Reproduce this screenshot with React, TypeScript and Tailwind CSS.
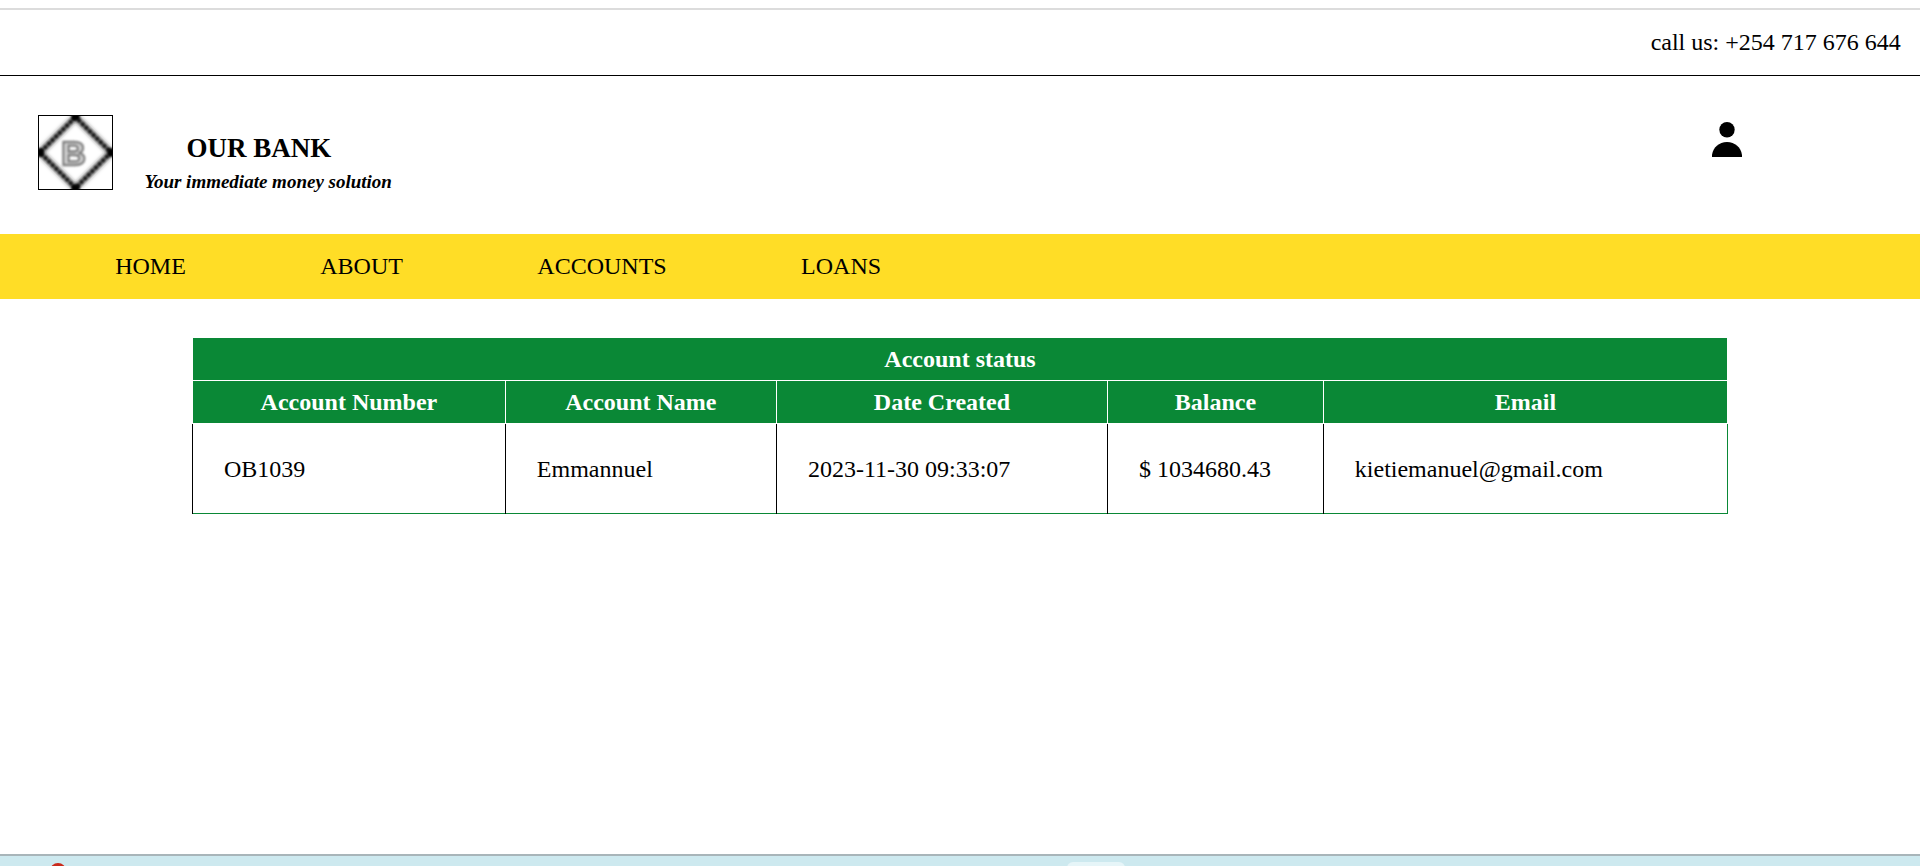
import React from "react";

const navItems = ["HOME", "ABOUT", "ACCOUNTS", "LOANS"];

const columns = [
  { title: "Account Number", value: "OB1039" },
  { title: "Account Name", value: "Emmannuel" },
  { title: "Date Created", value: "2023-11-30 09:33:07" },
  { title: "Balance", value: "$ 1034680.43" },
  { title: "Email", value: "kietiemanuel@gmail.com" },
];

function Logo() {
  return (
    <svg viewBox="0 0 73 73" className="size-[75px] border border-black" role="img" aria-label="Our Bank logo">
      <defs>
        <filter id="soft" x="-20%" y="-20%" width="140%" height="140%">
          <feGaussianBlur stdDeviation="1.9" />
        </filter>
        <filter id="bead" x="-20%" y="-20%" width="140%" height="140%">
          <feGaussianBlur stdDeviation="0.9" />
        </filter>
        <filter id="letter" x="-30%" y="-30%" width="160%" height="160%">
          <feGaussianBlur stdDeviation="1.1" />
        </filter>
      </defs>
      <path d="M36.5 1 L72 36.5 L36.5 72 L1 36.5 Z" fill="none" stroke="#222" strokeWidth="4.6" filter="url(#soft)" />
      <path
        d="M36.5 1 L72 36.5 L36.5 72 L1 36.5 Z"
        fill="none"
        stroke="#000"
        strokeWidth="3.2"
        strokeLinecap="round"
        strokeDasharray="0.1 5.0"
        filter="url(#bead)"
      />
      <g filter="url(#bead)">
        <rect x="32.5" y="-2" width="8" height="6" />
        <rect x="32.5" y="69" width="8" height="6" />
        <rect x="-2" y="32.5" width="6" height="8" />
        <rect x="69" y="32.5" width="6" height="8" />
      </g>
      <text
        x="34.5"
        y="49"
        textAnchor="middle"
        fontFamily="Liberation Sans, sans-serif"
        fontWeight="bold"
        fontSize="34"
        fill="#dcdcdc"
        stroke="#7c7c7c"
        strokeWidth="2.4"
        filter="url(#letter)"
      >
        B
      </text>
    </svg>
  );
}

function UserIcon() {
  return (
    <svg viewBox="0 0 30 35" className="h-[35px] w-[30px]" aria-hidden="true">
      <circle cx="15" cy="7.7" r="7.7" />
      <path d="M0 35 V33 C1 25.5 7 20 15 20 S29 25.5 30 33 V35 Z" />
    </svg>
  );
}

export default function App() {
  return (
    <div className="flex min-h-screen flex-col overflow-hidden bg-white pt-2 font-['Liberation_Serif',serif] text-2xl leading-7 text-black">
      <div className="flex justify-end border-t-2 border-b border-t-[#dcdcdc] border-b-black px-[1%] pt-[18px] pb-[19px]">
        <p>call us: +254 717 676 644</p>
      </div>

      <header className="flex items-start justify-between pt-[39px] pr-[9.25%] pb-9 pl-[2%]">
        <div className="flex items-start gap-[31px]">
          <Logo />
          <div className="pt-4 font-bold">
            <h1 className="pl-[42px] text-[27px] leading-[34px]">OUR BANK</h1>
            <p className="text-[19px] leading-[33px] italic">Your immediate money solution</p>
          </div>
        </div>
        <button type="button" aria-label="Account" className="mt-[7px]">
          <UserIcon />
        </button>
      </header>

      <nav className="flex gap-x-[7vw] bg-[#ffdd26] px-[6%] pt-[18px] pb-[19px]">
        {navItems.map((item) => (
          <a key={item} href="#">
            {item}
          </a>
        ))}
      </nav>

      <main className="flex-1 px-[10%] pt-[38px]">
        <table className="w-full table-fixed border-collapse border border-[#0a8836]">
          <colgroup>
            <col className="w-[20.38%]" />
            <col className="w-[17.66%]" />
            <col className="w-[21.57%]" />
            <col className="w-[14.06%]" />
            <col />
          </colgroup>
          <thead className="bg-[#0a8836] text-white">
            <tr>
              <th colSpan={5} className="h-[43px] border border-white">
                Account status
              </th>
            </tr>
            <tr>
              {columns.map((c) => (
                <th key={c.title} scope="col" className="h-[43px] border border-white">
                  {c.title}
                </th>
              ))}
            </tr>
          </thead>
          <tbody>
            <tr>
              {columns.map((c) => (
                <td key={c.title} className="h-[90px] border-l border-black px-[31px]">
                  {c.value}
                </td>
              ))}
            </tr>
          </tbody>
        </table>
      </main>

      <footer className="flex h-3 overflow-hidden border-t-2 border-[#a8b5b9] bg-[#cde9ef] pt-1.5">
        <div className="flex w-[55.55%] shrink-0 pl-[50px]">
          <span className="mt-px size-4 shrink-0 rounded-full bg-[#c92a1c]" />
        </div>
        <span className="h-10 w-[58px] shrink-0 rounded-md bg-[#e6f5f8]" />
      </footer>
    </div>
  );
}
